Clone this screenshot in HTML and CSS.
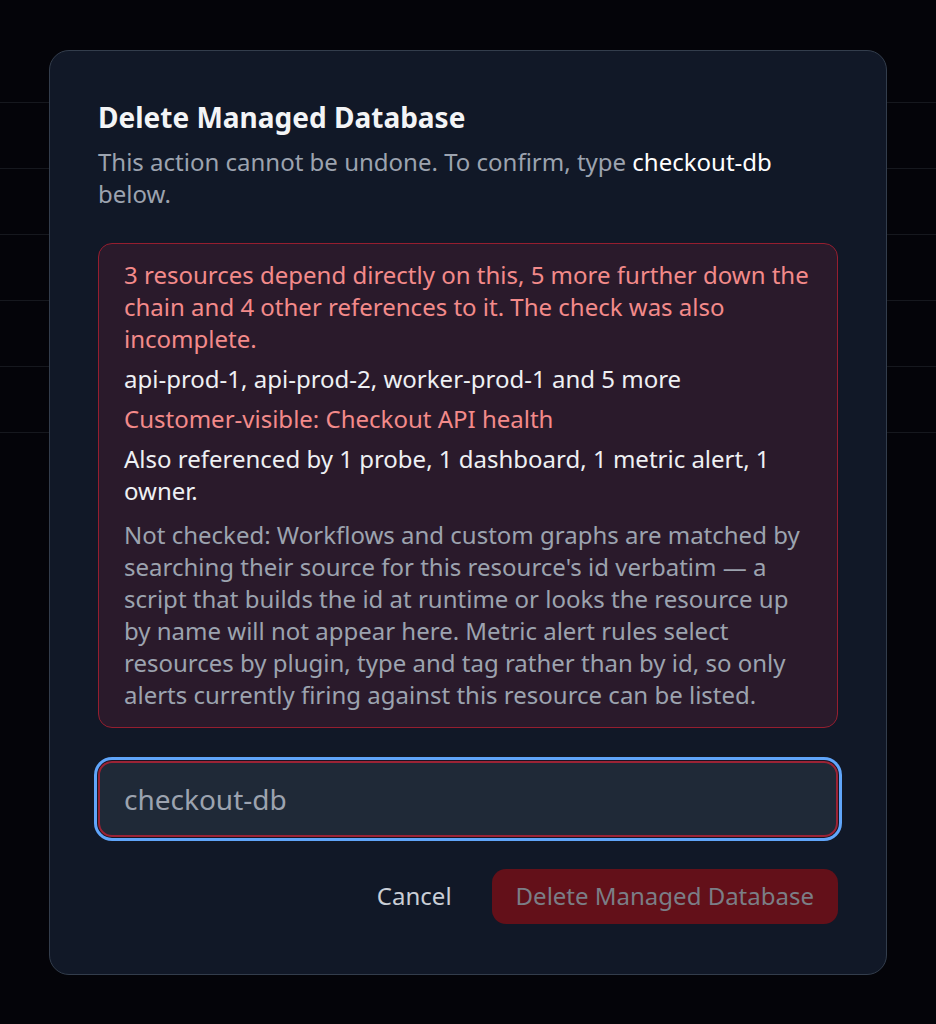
FILE: index.html
```html
<!DOCTYPE html>
<html lang="en">
<head>
<meta charset="utf-8">
<title>Delete Managed Database</title>
<link rel="stylesheet" href="styles.css">
</head>
<body>
<div class="page">
  <div class="bg-row"></div>
  <div class="bg-row"></div>
  <div class="bg-row"></div>
  <div class="bg-row"></div>
  <div class="bg-row"></div>
  <div class="bg-row"></div>
</div>
<div class="overlay">
  <div class="modal" role="dialog" aria-labelledby="dlg-title">
    <h2 id="dlg-title" class="title">Delete Managed Database</h2>
    <p class="desc">This action cannot be undone. To confirm, type <span class="strong">checkout-db</span> below.</p>
    <div class="warning">
      <p class="w-red">3 resources depend directly on this, 5 more further down the chain and 4 other references to it. The check was also incomplete.</p>
      <p class="w-white">api-prod-1, api-prod-2, worker-prod-1 and 5 more</p>
      <p class="w-red">Customer-visible: Checkout API health</p>
      <p class="w-white">Also referenced by 1 probe, 1 dashboard, 1 metric alert, 1 owner.</p>
      <p class="w-gray">Not checked: Workflows and custom graphs are matched by searching their source for this resource's id verbatim — a script that builds the id at runtime or looks the resource up by name will not appear here. Metric alert rules select resources by plugin, type and tag rather than by id, so only alerts currently firing against this resource can be listed.</p>
    </div>
    <input class="confirm" type="text" value="checkout-db" aria-label="Type checkout-db to confirm">
    <div class="actions">
      <button class="btn-cancel" type="button">Cancel</button>
      <button class="btn-delete" type="button" disabled>Delete Managed Database</button>
    </div>
  </div>
</div>
</body>
</html>
```
FILE: styles.css
```css
html, body {
  margin: 0;
  padding: 0;
}
body {
  background: #040409;
  font-family: "Noto Sans", "Open Sans", sans-serif;
  width: 936px;
  height: 1024px;
  overflow: hidden;
}
.page {
  padding-top: 37px;
}
.bg-row {
  height: 65px;
  border-bottom: 1px solid #16181e;
}
.overlay {
  position: fixed;
  inset: 0;
  display: flex;
  align-items: center;
  justify-content: center;
}
.modal {
  box-sizing: border-box;
  width: 838px;
  background: #111827;
  border: 1.5px solid #333d4c;
  border-radius: 20px;
  padding: 48px 48px 50px;
}
.title {
  margin: 0;
  font-size: 28px;
  line-height: 36px;
  font-weight: 700;
  color: #f3f4f6;
}
.desc {
  margin: 11px 0 0;
  font-size: 24px;
  line-height: 32px;
  color: #9ca3af;
}
.strong {
  color: #ffffff;
}
.warning {
  margin-top: 33px;
  border: 1.5px solid #951e2f;
  background: #2a1a2b;
  border-radius: 14px;
  padding: 15.5px 24px 15.5px 25px;
}
.warning p {
  margin: 0;
  font-size: 24px;
  line-height: 32px;
}
.warning p + p {
  margin-top: 8px;
}
.warning p.w-gray {
  margin-top: 12px;
}
.w-red {
  color: #f38a8a;
}
.w-white {
  color: #eef0f3;
}
.w-gray {
  color: #9ca3af;
}
.confirm {
  display: block;
  box-sizing: border-box;
  width: 100%;
  height: 76px;
  margin-top: 33px;
  padding: 0 24px;
  background: #1f2937;
  border: 2px solid #9b2335;
  border-radius: 14px;
  box-shadow: 0 0 0 1px #1a1422, 0 0 0 4px #60a5fa;
  outline: none;
  font-family: inherit;
  font-size: 28px;
  color: #9ca3af;
}
.actions {
  margin-top: 32px;
  display: flex;
  justify-content: flex-end;
  align-items: center;
  gap: 16px;
}
.btn-cancel, .btn-delete {
  font-family: inherit;
  font-size: 24px;
  line-height: 32px;
  border: 0;
  border-radius: 14px;
  height: 55px;
  padding: 0 24px;
  cursor: pointer;
}
.btn-cancel {
  background: transparent;
  color: #c9ced6;
}
.btn-delete {
  background: #631019;
  color: #7b7e86;
}
```
